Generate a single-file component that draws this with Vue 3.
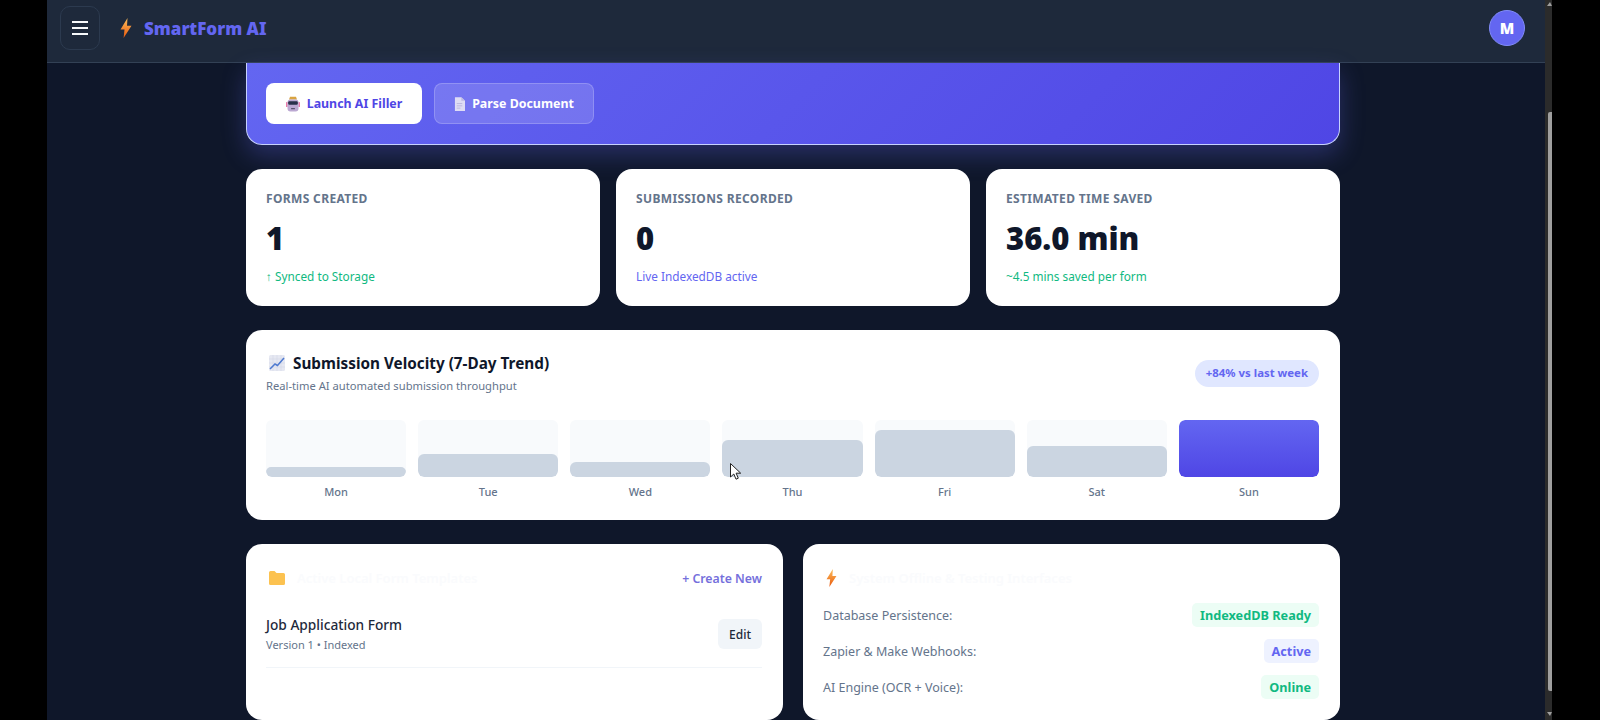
<script setup>
const stats = [
  { label: 'Forms Created', value: '1', note: '↑ Synced to Storage', tone: 'green' },
  { label: 'Submissions Recorded', value: '0', note: 'Live IndexedDB active', tone: 'indigo' },
  { label: 'Estimated Time Saved', value: '36.0 min', note: '~4.5 mins saved per form', tone: 'green' },
]

const days = [
  { name: 'Mon', height: 10 },
  { name: 'Tue', height: 23 },
  { name: 'Wed', height: 15 },
  { name: 'Thu', height: 37 },
  { name: 'Fri', height: 47 },
  { name: 'Sat', height: 31 },
  { name: 'Sun', height: 57, top: true },
]

const services = [
  { label: 'Database Persistence:', state: 'IndexedDB Ready', tone: 'ok' },
  { label: 'Zapier & Make Webhooks:', state: 'Active', tone: 'live' },
  { label: 'AI Engine (OCR + Voice):', state: 'Online', tone: 'ok' },
]
</script>

<template>
  <div class="frame">
    <div class="app">
      <header class="topbar">
        <div class="brand">
          <button class="burger" aria-label="Menu">
            <svg width="16" height="16" viewBox="0 0 16 16"><path d="M0 2h16M0 8h16M0 14h16" stroke="#f8fafc" stroke-width="2" /></svg>
          </button>
          <svg class="bolt" width="12" height="20" viewBox="0 0 12 20">
            <defs>
              <linearGradient id="boltA" x1="0" y1="0" x2="0" y2="1">
                <stop offset="0" stop-color="#fbbf5d" />
                <stop offset="1" stop-color="#ea580c" />
              </linearGradient>
            </defs>
            <path d="M7.5 0 0.5 11.5h4L3.6 20 11.5 7.8H7z" fill="url(#boltA)" />
          </svg>
          <span class="logo">SmartForm AI</span>
        </div>
        <div class="avatar">M</div>
      </header>

      <main class="content">
        <section class="hero">
          <button class="btn solid">
            <svg width="14" height="16" viewBox="0 0 14 16">
              <path d="M3 3.5 4 .8h6l1 2.7z" fill="#d9a441" />
              <rect x="0" y="6" width="1.6" height="5" rx=".6" fill="#e879a8" />
              <rect x="12.4" y="6" width="1.6" height="5" rx=".6" fill="#e879a8" />
              <rect x="1.5" y="3.5" width="11" height="12" rx="3" fill="#bba8d2" />
              <rect x="2.2" y="5.2" width="9.6" height="3.6" rx="1.2" fill="#28304a" />
              <rect x="5" y="12" width="4" height="1.2" rx=".5" fill="#5b5470" />
            </svg>
            Launch AI Filler
          </button>
          <button class="btn ghost">
            <svg width="11" height="14" viewBox="0 0 12 15">
              <path d="M1 0h7l4 4v11H1z" fill="#dedcf4" />
              <path d="M8 0v4h4z" fill="#bdbae2" />
              <path d="M3 7h6M3 9.5h6M3 12h4" stroke="#b9b6de" stroke-width="1" />
            </svg>
            Parse Document
          </button>
        </section>

        <section class="stats">
          <div v-for="s in stats" :key="s.label" class="card stat">
            <div class="stat-label">{{ s.label }}</div>
            <div class="stat-value">{{ s.value }}</div>
            <div class="stat-note" :class="s.tone">{{ s.note }}</div>
          </div>
        </section>

        <section class="card chart">
          <div class="chart-head">
            <div>
              <h2 class="chart-title">
                <svg width="16" height="16" viewBox="0 0 16 16">
                  <rect width="16" height="16" rx="1.5" fill="#e6e8f2" />
                  <path d="M4 0v16M8 0v16M12 0v16M0 4h16M0 8h16M0 12h16" stroke="#d3d7e6" stroke-width=".6" />
                  <path d="M1 14 6 9l2.5 1.5L15 3" fill="none" stroke="#4f7ad0" stroke-width="1.5" />
                </svg>
                Submission Velocity (7-Day Trend)
              </h2>
              <p class="chart-sub">Real-time AI automated submission throughput</p>
            </div>
            <span class="pill">+84% vs last week</span>
          </div>
          <div class="bars">
            <div v-for="d in days" :key="d.name" class="day">
              <div class="track">
                <div class="fill" :class="{ top: d.top }" :style="{ height: d.height + 'px' }"></div>
              </div>
              <span class="day-name">{{ d.name }}</span>
            </div>
          </div>
        </section>

        <section class="lower">
          <div class="card panel forms">
            <div class="panel-head">
              <h3 class="faded">
                <svg width="16" height="14" viewBox="0 0 16 14">
                  <path d="M0 1.5A1.5 1.5 0 0 1 1.5 0h4L7.5 2h7A1.5 1.5 0 0 1 16 3.5v9a1.5 1.5 0 0 1-1.5 1.5h-13A1.5 1.5 0 0 1 0 12.5z" fill="#fcc250" />
                </svg>
                Active Local Form Templates
              </h3>
              <a class="create">+ Create New</a>
            </div>
            <div class="form-row">
              <div>
                <div class="form-name">Job Application Form</div>
                <div class="form-meta">Version 1 • Indexed</div>
              </div>
              <button class="edit">Edit</button>
            </div>
          </div>

          <div class="card panel status">
            <div class="panel-head">
              <h3 class="faded">
                <svg width="11" height="18" viewBox="0 0 12 20">
                  <path d="M7.5 0 0.5 11.5h4L3.6 20 11.5 7.8H7z" fill="url(#boltA)" />
                </svg>
                System Offline &amp; Testing Interfaces
              </h3>
            </div>
            <div v-for="r in services" :key="r.label" class="service">
              <span>{{ r.label }}</span>
              <b class="badge" :class="r.tone">{{ r.state }}</b>
            </div>
          </div>
        </section>
      </main>

      <svg class="cursor" width="12" height="17" viewBox="0 0 12 17">
        <path d="M.5.5v13.5l3.3-3 2.2 5.2 2.3-1-2.2-5h4.6z" fill="#fff" stroke="#222" stroke-width="1" />
      </svg>
    </div>

    <div class="scrollbar">
      <span class="arrow up"></span>
      <span class="thumb"></span>
      <span class="arrow down"></span>
    </div>
  </div>
</template>

<style>
html, body { margin: 0; background: #000; }
</style>

<style scoped>
.frame {
  display: flex;
  width: 1600px;
  height: 720px;
  padding-left: 47px;
  box-sizing: border-box;
  overflow: hidden;
  background: #000;
  font-family: "Noto Sans", "Open Sans", sans-serif;
}
.app {
  position: relative;
  display: flex;
  flex-direction: column;
  width: 1498px;
  height: 720px;
  background: #0f172a;
}

.topbar {
  display: flex;
  align-items: center;
  justify-content: space-between;
  flex: none;
  box-sizing: border-box;
  height: 63px;
  padding: 0 20px 6px 13px;
  background: #1e293b;
  border-bottom: 1px solid #334155;
}
.brand { display: flex; align-items: center; }
.burger {
  display: flex;
  align-items: center;
  justify-content: center;
  width: 40px;
  height: 44px;
  padding: 0;
  background: #1e293b;
  border: 1px solid #2c3a4f;
  border-radius: 10px;
}
.bolt { margin-left: 20px; }
.logo {
  margin-left: 12px;
  font-size: 17px;
  font-weight: 900;
  color: #6366f1;
}
.avatar {
  display: flex;
  align-items: center;
  justify-content: center;
  width: 36px;
  height: 36px;
  box-sizing: border-box;
  border: 1px solid #818cf8;
  border-radius: 50%;
  background: #6366f1;
  color: #fff;
  font-size: 15px;
  font-weight: 900;
}

.content {
  display: flex;
  flex-direction: column;
  gap: 24px;
  min-height: 0;
  padding: 0 205px 0 199px;
}
.card { background: #fff; border-radius: 16px; }

.hero {
  display: flex;
  flex: none;
  gap: 12px;
  box-sizing: border-box;
  height: 82px;
  padding: 20px 19px 0;
  background: linear-gradient(135deg, #6366f1, #4f46e5);
  border: 1px solid #c7d2fe;
  border-top: 0;
  border-radius: 0 0 16px 16px;
  box-shadow: 0 10px 25px rgba(99, 102, 241, .3);
}
.btn {
  display: flex;
  align-items: center;
  justify-content: center;
  gap: 7px;
  height: 41px;
  padding: 0;
  border-radius: 8px;
  font-family: inherit;
  font-size: 12.4px;
  font-weight: 700;
}
.solid { width: 156px; background: #fff; border: 0; color: #4f46e5; }
.ghost { width: 160px; background: rgba(255, 255, 255, .15); border: 1px solid rgba(255, 255, 255, .2); color: #fff; }

.stats { display: flex; flex: none; gap: 16px; }
.stat {
  flex: 1;
  box-sizing: border-box;
  height: 137px;
  padding: 21px 20px 0;
}
.stat-label {
  font-size: 12px;
  font-weight: 700;
  line-height: 18px;
  letter-spacing: .35px;
  text-transform: uppercase;
  color: #64748b;
}
.stat-value {
  margin-top: 8px;
  font-size: 31px;
  font-weight: 900;
  line-height: 44px;
  color: #0f172a;
}
.stat-note { margin-top: 7px; font-size: 11.8px; line-height: 18px; }
.stat-note.green { color: #10b981; }
.stat-note.indigo { color: #6366f1; }

.chart { flex: none; box-sizing: border-box; height: 190px; padding: 22px 21px 0 20px; }
.chart-head { display: flex; align-items: center; justify-content: space-between; }
.chart-title {
  display: flex;
  align-items: center;
  gap: 8px;
  margin: 0 0 0 3px;
  font-size: 15.3px;
  font-weight: 700;
  line-height: 22px;
  color: #0f172a;
}
.chart-sub { margin: 3px 0 0; font-size: 11.2px; line-height: 18px; color: #64748b; }
.pill {
  padding: 4px 11px 5px;
  margin-top: -1px;
  border-radius: 14px;
  background: #e0e7ff;
  color: #6366f1;
  font-size: 11.4px;
  font-weight: 700;
  line-height: 18px;
}
.bars { display: flex; gap: 12px; margin-top: 25px; }
.day { display: flex; flex: 1; flex-direction: column; align-items: center; gap: 7px; }
.track {
  display: flex;
  align-items: flex-end;
  width: 100%;
  height: 57px;
  background: #f8fafc;
  border-radius: 6px;
  overflow: hidden;
}
.fill { width: 100%; background: #cbd5e1; border-radius: 6px; }
.fill.top { background: linear-gradient(180deg, #6366f1, #4f46e5); }
.day-name { font-size: 11px; font-weight: 500; line-height: 16px; color: #64748b; }

.lower { display: flex; flex: none; gap: 20px; }
.panel { box-sizing: border-box; height: 176px; padding: 20px 21px 20px 20px; }
.forms { width: 537px; }
.status { width: 537px; }
.panel-head {
  display: flex;
  align-items: center;
  justify-content: space-between;
  height: 28px;
}
.faded {
  display: flex;
  align-items: center;
  gap: 12px;
  margin: 0;
  padding-left: 3px;
  font-size: 13px;
  font-weight: 600;
  color: #fafbfd;
}
.create { font-size: 12.3px; font-weight: 600; color: #7570dc; }
.form-row {
  display: flex;
  align-items: center;
  justify-content: space-between;
  margin-top: 23px;
  padding-bottom: 14px;
  border-bottom: 1px solid #f1f5f9;
}
.form-name { font-size: 13.7px; font-weight: 500; line-height: 20px; color: #1e293b; }
.form-meta { margin-top: 1px; font-size: 11px; line-height: 17px; color: #64748b; }
.edit {
  width: 44px;
  height: 30px;
  padding: 0;
  border: 0;
  border-radius: 6px;
  background: #f1f5f9;
  color: #1e293b;
  font-family: inherit;
  font-size: 12px;
  font-weight: 500;
}
.status .panel-head { margin-bottom: 11px; }
.service {
  display: flex;
  align-items: center;
  justify-content: space-between;
  height: 24px;
  margin-bottom: 12px;
  font-size: 12.5px;
  color: #64748b;
}
.badge {
  padding: 2px 8px;
  border-radius: 5px;
  font-size: 12.7px;
  font-weight: 700;
  line-height: 20px;
}
.badge.ok { background: #ecfdf5; color: #10b981; }
.badge.live { background: #eef2ff; color: #6366f1; }

.cursor { position: absolute; left: 683px; top: 463px; }

.scrollbar {
  position: relative;
  width: 7px;
  height: 720px;
  background: #2b2b2b;
}
.thumb {
  position: absolute;
  top: 112px;
  right: 0;
  width: 4px;
  height: 579px;
  border-radius: 2px 0 0 2px;
  background: #9f9f9f;
}
.arrow { position: absolute; right: 0; border-left: 3px solid transparent; border-right: 2px solid transparent; }
.arrow.up { top: 2px; border-bottom: 4px solid #9f9f9f; }
.arrow.down { bottom: 4px; border-top: 4px solid #9f9f9f; }
</style>
